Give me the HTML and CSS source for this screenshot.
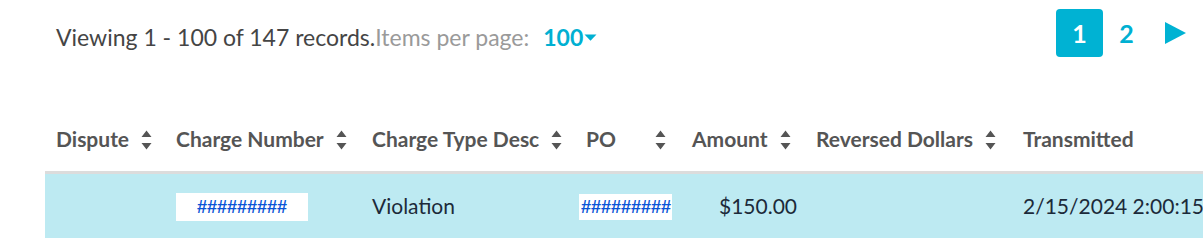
FILE: index.html
```html
<!DOCTYPE html>
<html>
<head>
<meta charset="utf-8">
<link rel="stylesheet" href="styles.css">
</head>
<body>
<div class="page">
  <div class="toolbar">
    <div class="summary">
      <span class="viewing">Viewing 1 - 100 of 147 records.</span><span class="per-page">Items per page:</span>
      <span class="size">100<svg class="caret" viewBox="0 0 13 7" width="13" height="7"><path d="M0.5 0.5H12.5L6.5 6.8Z"/></svg></span>
    </div>
    <div class="pager">
      <span class="pg active">1</span>
      <span class="pg">2</span>
      <svg class="next" viewBox="0 0 21 22" width="21" height="22"><path d="M0 0L21 11L0 22Z"/></svg>
    </div>
  </div>
  <table class="grid">
    <colgroup>
      <col class="c1"><col class="c2"><col class="c3"><col class="c4"><col class="c5"><col class="c6"><col class="c7">
    </colgroup>
    <thead>
      <tr>
        <th><span class="th">Dispute<svg class="sort" viewBox="0 0 11 20" width="11" height="20"><path d="M5.5 0.5L10.5 7H0.5Z M5.5 19.5L0.5 13H10.5Z"/></svg></span></th>
        <th><span class="th">Charge Number<svg class="sort" viewBox="0 0 11 20" width="11" height="20"><path d="M5.5 0.5L10.5 7H0.5Z M5.5 19.5L0.5 13H10.5Z"/></svg></span></th>
        <th><span class="th">Charge Type Desc<svg class="sort" viewBox="0 0 11 20" width="11" height="20"><path d="M5.5 0.5L10.5 7H0.5Z M5.5 19.5L0.5 13H10.5Z"/></svg></span></th>
        <th><span class="th po">PO<svg class="sort" viewBox="0 0 11 20" width="11" height="20"><path d="M5.5 0.5L10.5 7H0.5Z M5.5 19.5L0.5 13H10.5Z"/></svg></span></th>
        <th><span class="th">Amount<svg class="sort" viewBox="0 0 11 20" width="11" height="20"><path d="M5.5 0.5L10.5 7H0.5Z M5.5 19.5L0.5 13H10.5Z"/></svg></span></th>
        <th><span class="th">Reversed Dollars<svg class="sort" viewBox="0 0 11 20" width="11" height="20"><path d="M5.5 0.5L10.5 7H0.5Z M5.5 19.5L0.5 13H10.5Z"/></svg></span></th>
        <th><span class="th">Transmitted</span></th>
      </tr>
    </thead>
    <tbody>
      <tr class="selected">
        <td></td>
        <td><span class="masked wide">#########</span></td>
        <td>Violation</td>
        <td class="po-cell"><span class="masked">#########</span></td>
        <td class="amount">$150.00</td>
        <td></td>
        <td>2/15/2024 2:00:15</td>
      </tr>
    </tbody>
  </table>
</div>
</body>
</html>
```

FILE: styles.css
```css
html, body {
  margin: 0;
  padding: 0;
  background: #ffffff;
  overflow: hidden;
}

.page {
  width: 1203px;
  height: 238px;
  font-family: Lato, "Open Sans", sans-serif;
}

.toolbar {
  display: flex;
  justify-content: space-between;
  align-items: flex-start;
  padding: 9px 0 0 56px;
  height: 110px;
  box-sizing: border-box;
}

.summary {
  padding-top: 14px;
  font-size: 23px;
  line-height: 28px;
  display: flex;
  align-items: baseline;
}

.viewing {
  color: #454545;
}

.per-page {
  color: #9a9a9a;
}

.size {
  margin-left: 14px;
  color: #00b0d2;
  font-weight: 700;
  display: inline-flex;
  align-items: center;
}

.caret {
  fill: #00b0d2;
  margin-left: 1px;
  margin-top: 1px;
}

.pager {
  display: flex;
  align-items: center;
  margin-right: 17px;
}

.pg {
  width: 47px;
  height: 48px;
  display: flex;
  align-items: center;
  justify-content: center;
  font-size: 25px;
  font-weight: 700;
  color: #00b0d2;
  border-radius: 4px;
}

.pg.active {
  background: #00b2d3;
  color: #ffffff;
}

.next {
  fill: #00b2d3;
  margin-left: 15px;
}

.grid {
  margin-left: 45px;
  border-collapse: collapse;
  table-layout: fixed;
  width: 1200px;
}

.c1 { width: 120px; }
.c2 { width: 196px; }
.c3 { width: 214px; }
.c4 { width: 106px; }
.c5 { width: 124px; }
.c6 { width: 207px; }
.c7 { width: 233px; }

.grid th {
  text-align: left;
  padding: 17px 0 20px 11px;
  border-bottom: 3px solid #dcdcdc;
  font-size: 21px;
  line-height: 24px;
  font-weight: 700;
  color: #555555;
  white-space: nowrap;
  vertical-align: bottom;
}

.th {
  display: inline-flex;
  align-items: center;
  height: 24px;
}

.th.po {
  width: 80px;
  justify-content: space-between;
}

.sort {
  fill: #555555;
  margin-left: 12px;
  margin-top: 2px;
}

.selected td {
  background: #bdeaf2;
  height: 64px;
  padding: 0 0 0 11px;
  font-size: 21px;
  line-height: 26px;
  color: #1c2a3a;
  vertical-align: middle;
  white-space: nowrap;
}

.masked {
  display: inline-block;
  vertical-align: middle;
  background: #ffffff;
  color: #0a55d6;
  font-family: "Liberation Sans", Arial, sans-serif;
  font-weight: 700;
  font-size: 18px;
  line-height: 26px;
  padding: 0 1px 0 2px;
}

.masked.wide {
  width: 132px;
  box-sizing: border-box;
  padding: 1px 0;
  text-align: center;
}

.po-cell {
  padding-left: 4px !important;
}

.amount {
  padding-left: 38px !important;
}
```
